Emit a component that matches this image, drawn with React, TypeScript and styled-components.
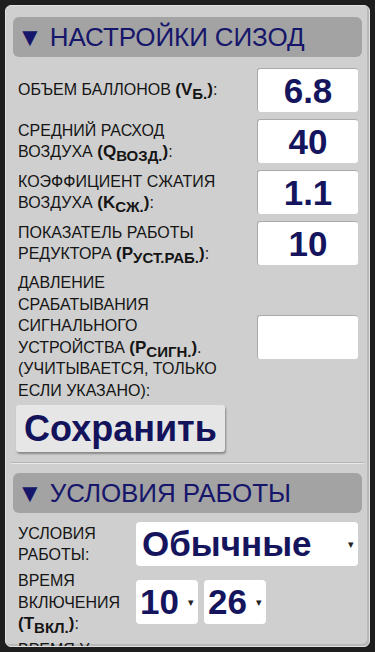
import styled, { createGlobalStyle } from 'styled-components';

const GlobalStyle = createGlobalStyle`
  html, body {
    margin: 0;
    padding: 0;
    background: #1e1e1e;
    font-family: "Liberation Sans", Arial, sans-serif;
  }
`;

const fields = [
  { lines: ['ОБЪЕМ БАЛЛОНОВ'], sym: 'V', sub: 'Б.', value: '6.8' },
  { lines: ['СРЕДНИЙ РАСХОД', 'ВОЗДУХА'], sym: 'Q', sub: 'ВОЗД.', value: '40' },
  { lines: ['КОЭФФИЦИЕНТ СЖАТИЯ', 'ВОЗДУХА'], sym: 'K', sub: 'СЖ.', value: '1.1' },
  { lines: ['ПОКАЗАТЕЛЬ РАБОТЫ', 'РЕДУКТОРА'], sym: 'P', sub: 'УСТ.РАБ.', value: '10' },
];

const App = () => {
  return (
    <>
      <GlobalStyle />
      <Panel>
        <SectionHeader>▼ НАСТРОЙКИ СИЗОД</SectionHeader>
        <FieldList>
          {fields.map((f) => (
            <FieldRow key={f.sym}>
              <Label>
                {f.lines.map((l, i) => (
                  <span key={i}>
                    {l}
                    {i < f.lines.length - 1 ? <br /> : ' '}
                  </span>
                ))}
                <Sym>
                  ({f.sym}
                  <sub>{f.sub}</sub>)
                </Sym>
                :
              </Label>
              <ValueBox>{f.value}</ValueBox>
            </FieldRow>
          ))}
          <FieldRow>
            <Label>
              ДАВЛЕНИЕ
              <br />
              СРАБАТЫВАНИЯ
              <br />
              СИГНАЛЬНОГО
              <br />
              УСТРОЙСТВА{' '}
              <Sym>
                (P<sub>СИГН.</sub>)
              </Sym>
              .
              <br />
              (УЧИТЫВАЕТСЯ, ТОЛЬКО
              <br />
              ЕСЛИ УКАЗАНО):
            </Label>
            <ValueBox />
          </FieldRow>
        </FieldList>
        <SaveButton>Сохранить</SaveButton>
        <Divider />
        <SectionHeader>▼ УСЛОВИЯ РАБОТЫ</SectionHeader>
        <CondGrid>
          <Label>
            УСЛОВИЯ
            <br />
            РАБОТЫ:
          </Label>
          <Select $wide>
            <span>Обычные</span>
            <Arrow>▾</Arrow>
          </Select>
          <Label>
            ВРЕМЯ
            <br />
            ВКЛЮЧЕНИЯ
            <br />
            <Sym>
              (T<sub>ВКЛ.</sub>)
            </Sym>
            :
          </Label>
          <SelectGroup>
            <Select>
              <span>10</span>
              <Arrow>▾</Arrow>
            </Select>
            <Select>
              <span>26</span>
              <Arrow>▾</Arrow>
            </Select>
          </SelectGroup>
          <Label>
            ВРЕМЯ У
            <br />
            ВЫХОДА
          </Label>
          <div />
        </CondGrid>
      </Panel>
    </>
  );
};

const Panel = styled.div`
  margin: 5px;
  height: 642px;
  box-sizing: border-box;
  overflow: hidden;
  background: #cfcfcf;
  border: 1px solid #e0e0e0;
  border-radius: 6px;
  padding: 11px 7px 0 7px;
  box-shadow: inset -2px -2px 0 #b8b8b8;
`;

const SectionHeader = styled.div`
  height: 40px;
  display: flex;
  align-items: center;
  padding-left: 4px;
  background: #a3a3a3;
  border-radius: 6px;
  color: #16166a;
  font-size: 26px;
  letter-spacing: -0.1px;
`;

const FieldList = styled.div`
  display: flex;
  flex-direction: column;
  gap: 7px;
  margin-top: 11px;
`;

const FieldRow = styled.div`
  display: flex;
  align-items: center;
  justify-content: space-between;
  padding-left: 5px;
`;

const Label = styled.div`
  color: #151515;
  font-size: 16px;
  line-height: 21.5px;
  text-transform: uppercase;
`;

const Sym = styled.b`
  font-weight: 700;
  font-size: 17px;
  sub {
    font-size: 15px;
    vertical-align: -4px;
    line-height: 0;
  }
`;

const ValueBox = styled.div`
  flex: none;
  width: 101px;
  height: 44px;
  margin-right: 4px;
  box-sizing: border-box;
  background: #fff;
  border-radius: 3px;
  border-top: 1px solid #aaa;
  border-left: 1px solid #aaa;
  display: flex;
  align-items: center;
  justify-content: center;
  color: #15155e;
  font-size: 35px;
  font-weight: 700;
`;

const SaveButton = styled.button`
  display: block;
  margin: 4px 0 0 3px;
  width: 209px;
  height: 47px;
  background: #e6e6e6;
  border: none;
  border-radius: 3px;
  box-shadow: 1px 2px 2px #8a8a8a;
  color: #13135c;
  font-family: "Liberation Sans", Arial, sans-serif;
  font-size: 36px;
  font-weight: 700;
  padding: 0;
`;

const Divider = styled.div`
  margin: 10px -2px 9px -2px;
  height: 1px;
  background: #b5b5b5;
  border-bottom: 1px solid #e8e8e8;
`;

const CondGrid = styled.div`
  display: grid;
  grid-template-columns: 118px 1fr;
  align-items: center;
  row-gap: 4px;
  margin-top: 9px;
  padding-left: 5px;
`;

const SelectGroup = styled.div`
  display: flex;
  gap: 6px;
`;

const Select = styled.div<{ $wide?: boolean }>`
  width: ${(p) => (p.$wide ? '222px' : '62px')};
  height: 44px;
  box-sizing: border-box;
  background: #fff;
  border-radius: 4px;
  display: flex;
  align-items: center;
  justify-content: space-between;
  padding: 0 4px 0 ${(p) => (p.$wide ? '6px' : '4px')};
  color: #15155e;
  font-size: 35px;
  font-weight: 700;
`;

const Arrow = styled.span`
  font-size: 11px;
  color: #222;
  font-weight: 400;
`;

export default App;
